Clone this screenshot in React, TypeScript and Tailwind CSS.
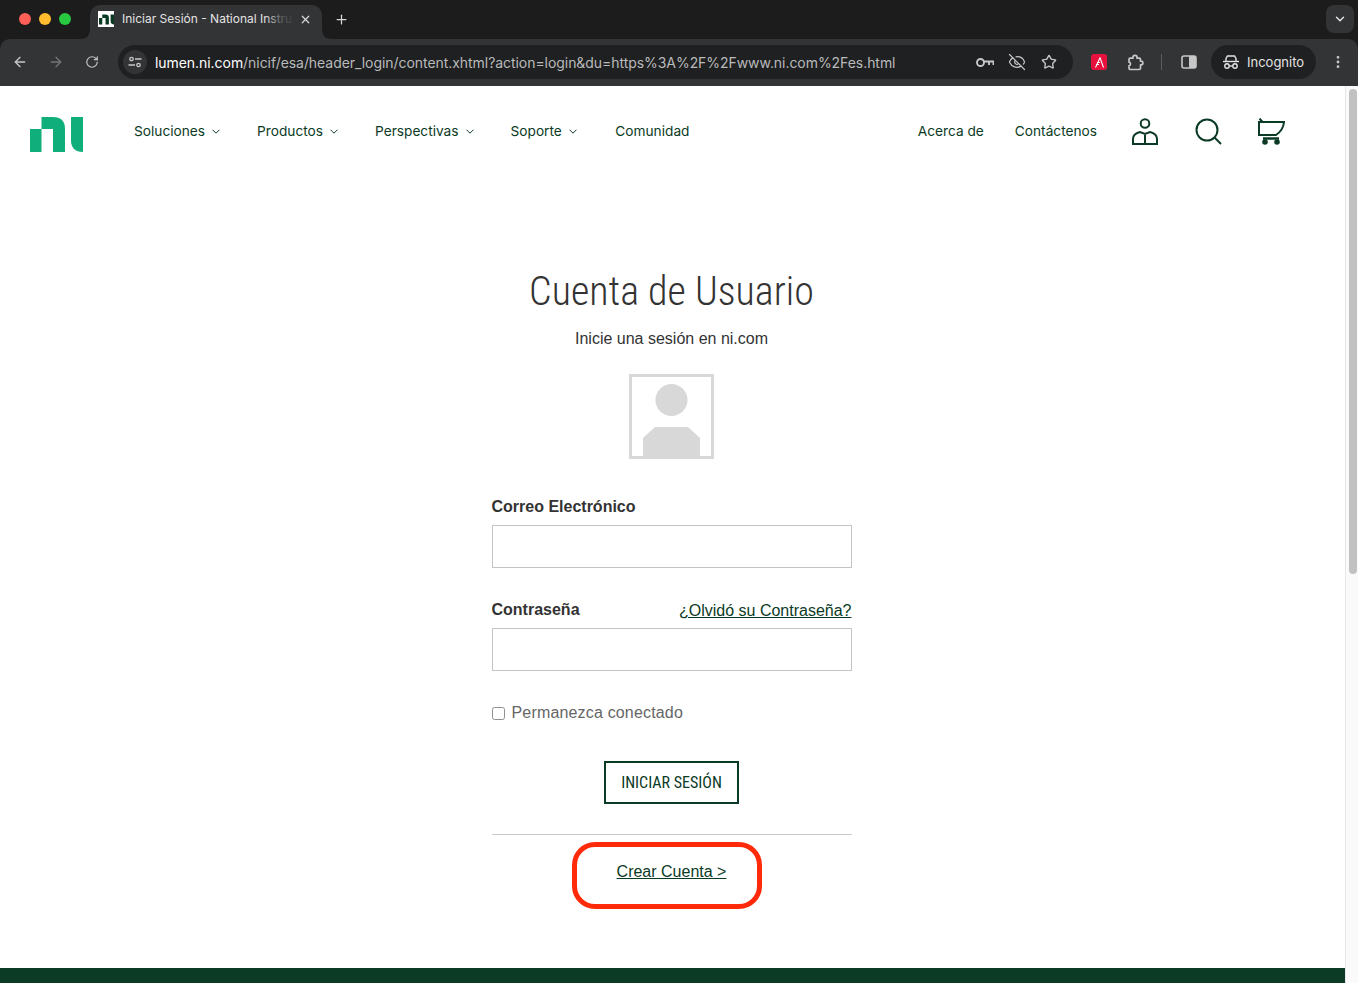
import { ArrowLeft, ArrowRight, RotateCw, X, Plus, ChevronDown, Star, EyeOff, EllipsisVertical } from "lucide-react";

const GREEN = "#0b3a25";

function Nav({ label, caret = true }: { label: string; caret?: boolean }) {
  return (
    <a className="flex items-center gap-[7px] text-[13.7px] text-[#0b3a25] whitespace-nowrap">
      {label}
      {caret && (
        <svg width="8" height="5" viewBox="0 0 8 5" fill="none" stroke="#0b3a25" className="mt-[2px]">
          <path d="M.5.7 4 4.2 7.5.7" />
        </svg>
      )}
    </a>
  );
}

function Logo() {
  return (
    <svg width="53" height="35" viewBox="30 117 53 35" fill="#10ae7a" className="mt-[6px]">
      <path d="M30 129H41.500V117H53Q65 117 65 129V152H53V129H41.500V152H30Z" />
      <path d="M71 117H83V152Q71 152 71 140Z" />
    </svg>
  );
}

function Favicon() {
  return (
    <div className="w-4 h-4 bg-white flex items-center justify-center shrink-0">
      <svg width="15" height="11" viewBox="30 117 53 35" fill="#0b3a25">
        <path d="M30 129H41.500V117H53Q65 117 65 129V152H53V129H41.500V152H30Z" />
        <path d="M71 117H83V152Q71 152 71 140Z" />
      </svg>
    </div>
  );
}

function Flare({ side }: { side: "l" | "r" }) {
  return (
    <svg width="10" height="10" viewBox="0 0 10 10" className={side === "l" ? "absolute bottom-0 -left-[10px]" : "absolute bottom-0 -right-[10px]"} fill="#333436">
      {side === "l" ? <path d="M0 10Q10 10 10 0V10Z" /> : <path d="M10 10Q0 10 0 0V10Z" />}
    </svg>
  );
}

function Chrome() {
  return (
    <div className="bg-[#1c1c1d] h-[86px] shrink-0 flex flex-col font-['Inter',sans-serif]">
      <div className="h-[39px] flex items-end relative">
        <div className="flex gap-[8px] ml-[19px] mb-[14px] mr-[19px]">
          <span className="w-3 h-3 rounded-full bg-[#ff5f57]" />
          <span className="w-3 h-3 rounded-full bg-[#febc2e]" />
          <span className="w-3 h-3 rounded-full bg-[#28c840]" />
        </div>
        <div className="relative w-[232px] h-[34px] bg-[#333436] rounded-t-[10px] flex items-center pl-[8px] pr-[10px] pb-[6px]">
          <Flare side="l" />
          <Flare side="r" />
          <Favicon />
          <div className="relative ml-[8px] w-[167px] whitespace-nowrap text-[12px] text-[#e3e3e3]">
            Iniciar Sesión - National Instru
            <div className="absolute inset-y-0 right-[-6px] w-[30px] bg-gradient-to-r from-transparent via-[#333436]/70 to-[#333436]" />
          </div>
          <X size={13} strokeWidth={2.2} className="text-[#d6d6d6] ml-[10px]" />
        </div>
        <Plus size={15} strokeWidth={2} className="text-[#d6d6d6] ml-[12px] mb-[12px]" />
        <div className="ml-auto mr-[4px] mb-[6px] w-[28px] h-[28px] rounded-[8px] bg-[#333436] flex items-center justify-center">
          <ChevronDown size={14} strokeWidth={2.5} className="text-[#e3e3e3]" />
        </div>
      </div>
      <div className="h-[47px] bg-[#333436] rounded-t-[10px] flex items-center pb-[1px]">
        <ArrowLeft size={16} strokeWidth={2} className="text-[#c7c7c7] ml-[12px]" />
        <ArrowRight size={16} strokeWidth={2} className="text-[#747577] ml-[20px]" />
        <RotateCw size={14} strokeWidth={2} className="text-[#c7c7c7] ml-[21px]" />
        <div className="ml-[19px] w-[955px] h-[34px] rounded-full bg-[#1f2021] flex items-center pl-[5px] pr-[16px]">
          <div className="w-[24px] h-[24px] rounded-full bg-[#333436] flex items-center justify-center">
            <svg width="14" height="12" viewBox="0 0 14 12" fill="none" stroke="#c7c7c7" strokeWidth="1.3">
              <circle cx="3.500" cy="3" r="1.700" />
              <path d="M7 3h6.500M.5 9H7" />
              <circle cx="10.500" cy="9" r="1.700" />
            </svg>
          </div>
          <div className="ml-[8px] text-[14px] tracking-[-0.055px] text-[#b9babb] whitespace-nowrap">
            <span className="text-white">lumen.ni.com</span>/nicif/esa/header_login/content.xhtml?action=login&amp;du=https%3A%2F%2Fwww.ni.com%2Fes.html
          </div>
          <div className="ml-auto flex items-center gap-[14px] text-[#c7c7c7]">
            <svg width="18" height="11" viewBox="0 0 18 11" fill="none" stroke="#c7c7c7" strokeWidth="1.900">
              <circle cx="4.500" cy="5.500" r="3.500" />
              <path d="M8 4.500h9.500v3.500M13 4.500v3.500" />
            </svg>
            <EyeOff size={18} strokeWidth={1.600} />
            <Star size={16} strokeWidth={2} className="ml-[1px]" />
          </div>
        </div>
        <div className="ml-[18px] w-[16px] h-[16px] rounded-[3px] bg-[#e6123d] flex items-center justify-center">
          <svg width="11" height="11" viewBox="0 0 11 11" fill="none" stroke="#fff" strokeWidth="1.100">
            <path d="M1.500 10.500 6 .8l3.500 9.700M2 7.500h3M3 5.500h3" />
          </svg>
        </div>
        <svg width="17" height="17" viewBox="0 0 17 17" fill="none" stroke="#c7c7c7" strokeWidth="1.700" strokeLinejoin="round" className="ml-[20px]">
          <path d="M2 5.500c0-.8.500-1.300 1.300-1.300H6V3c0-2.300 4-2.300 4 0v1.200h2.200c.8 0 1.300.5 1.300 1.300v1.700h.7c2.200 0 2.200 3.600 0 3.600h-.7v3.400c0 .8-.5 1.300-1.300 1.300H3.300c-.8 0-1.300-.5-1.300-1.300v-2.400c2-.2 2-3.400 0-3.600z" />
        </svg>
        <div className="ml-[17px] w-px h-[16px] bg-[#5c5d5f]" />
        <svg width="16" height="14" viewBox="0 0 16 14" className="ml-[19px]">
          <rect x="1" y="1" width="14" height="12" rx="2" fill="none" stroke="#c7c7c7" strokeWidth="1.600" />
          <rect x="8" y="1" width="7" height="12" rx="1" fill="#c7c7c7" />
        </svg>
        <div className="ml-[14px] w-[105px] h-[34px] rounded-full bg-[#1f2021] flex items-center pl-[12px] gap-[8px] text-[13px] text-[#e3e3e3]">
          <svg width="16" height="14" viewBox="0 0 16 14" fill="none" stroke="#e3e3e3" strokeWidth="1.400">
            <path d="M0 6.500h16" />
            <path d="M3 6V3.500L4.500 1h7L13 3.500V6" />
            <circle cx="4" cy="11" r="2.200" />
            <circle cx="12" cy="11" r="2.200" />
            <path d="M6.200 11h3.600" />
          </svg>
          <span className="mt-[1px]">Incognito</span>
        </div>
        <EllipsisVertical size={16} strokeWidth={2.200} className="text-[#c7c7c7] ml-[14px]" />
      </div>
    </div>
  );
}

function Header() {
  return (
    <header className="h-[90px] shrink-0 flex items-center pl-[30px] font-['Inter',sans-serif]">
      <Logo />
      <nav className="ml-[51px] flex items-center gap-[37px]">
        <Nav label="Soluciones" />
        <Nav label="Productos" />
        <Nav label="Perspectivas" />
        <Nav label="Soporte" />
        <div className="ml-[1.500px]">
          <Nav label="Comunidad" caret={false} />
        </div>
      </nav>
      <div className="ml-auto flex items-center gap-[31px]">
        <Nav label="Acerca de" caret={false} />
        <Nav label="Contáctenos" caret={false} />
      </div>
      <div className="ml-[35px] mr-[60px] flex items-center gap-[36px]">
        <svg width="27" height="27" viewBox="0 0 27 27" fill="none" stroke={GREEN} strokeWidth="2">
          <circle cx="13" cy="5.500" r="4.300" />
          <path d="M1 26v-5c0-3.500 3-6 7-7l5 2 5-2c4 1 7 3.500 7 7v5zM13 15.500V26" />
        </svg>
        <svg width="27" height="27" viewBox="0 0 27 27" fill="none" stroke={GREEN} strokeWidth="2">
          <circle cx="12" cy="12" r="10.500" />
          <path d="M19.500 19.500l6.500 6.500" />
        </svg>
        <svg width="27" height="27" viewBox="0 0 27 27" fill="none" stroke={GREEN} strokeWidth="2">
          <path d="M1 4h25c-.5 6-3.500 10-8 13H1zM1.500.5l3 3.500" />
          <path d="M5 20.500h16" strokeWidth="2.500" />
          <circle cx="7" cy="24" r="1.800" fill={GREEN} />
          <circle cx="19" cy="24" r="1.800" fill={GREEN} />
        </svg>
      </div>
    </header>
  );
}

function Avatar() {
  return (
    <div className="w-[85px] h-[85px] border-[3px] border-[#d8d8d8] flex items-end justify-center overflow-hidden">
      <svg width="79" height="79" viewBox="0 0 79 79" fill="#d8d8d8">
        <circle cx="39.500" cy="23" r="16" />
        <path d="M11 79V61L23 50H56L68 61V79Z" />
      </svg>
    </div>
  );
}

function Form() {
  return (
    <main className="flex-1 flex flex-col items-center pr-[2px] font-['Liberation_Sans',sans-serif]">
      <h1 className="mt-[91px] h-[50px] leading-[50px] text-[40px] font-light text-[#333] whitespace-nowrap font-['Roboto',sans-serif] font-stretch-condensed">
        Cuenta de Usuario
      </h1>
      <p className="mt-[10px] h-[24px] leading-[24px] text-[16px] text-[#333]">Inicie una sesión en ni.com</p>
      <div className="mt-[23px]">
        <Avatar />
      </div>
      <div className="w-[360px] flex flex-col">
        <label className="mt-[36px] h-[24px] leading-[24px] text-[16px] font-bold text-[#333]">Correo Electrónico</label>
        <div className="mt-[6px] h-[43px] border border-[#c4c4c4]" />
        <div className="mt-[30px] h-[24px] flex items-center justify-between text-[16px]">
          <label className="font-bold text-[#333]">Contraseña</label>
          <a className="underline text-[#0b3a25] mt-[2px]">¿Olvidó su Contraseña?</a>
        </div>
        <div className="mt-[6px] h-[43px] border border-[#c4c4c4]" />
        <div className="mt-[30px] h-[24px] flex items-center gap-[7px] text-[16px] tracking-[0.17px] text-[#666]">
          <span className="w-[13px] h-[13px] border border-[#8f8f8f] rounded-[2.500px]" />
          Permanezca conectado
        </div>
        <div className="mt-[36px] self-center w-[135px] h-[43px] border-2 border-[#0b3a25] flex items-center justify-center text-[16px] text-[#0b3a25] font-['Roboto',sans-serif] font-stretch-condensed">
          INICIAR SESIÓN
        </div>
        <div className="mt-[30px] h-px bg-[#c8c8c8]" />
        <div className="mt-[25px] self-center relative">
          <a className="block leading-[24px] underline text-[16px] text-[#0b3a25]">Crear Cuenta &gt;</a>
          <div className="absolute left-[-45px] top-[-18px] w-[190px] h-[67px] border-[5px] border-[#ff2a0a] rounded-[23px]" />
        </div>
      </div>
    </main>
  );
}

export default function App() {
  return (
    <div className="h-[983px] w-full overflow-hidden flex flex-col bg-white">
      <Chrome />
      <div className="flex-1 flex min-h-0">
        <div className="flex-1 flex flex-col min-w-0">
          <Header />
          <Form />
          <div className="h-[15px] bg-[#0b3a25] shrink-0" />
        </div>
        <div className="w-[13px] shrink-0 border-l border-[#e8e8e8] bg-[#fafafa] pt-[3px] pl-[3px]">
          <div className="w-[8px] h-[485px] rounded-full bg-[#c1c1c1]" />
        </div>
      </div>
    </div>
  );
}
